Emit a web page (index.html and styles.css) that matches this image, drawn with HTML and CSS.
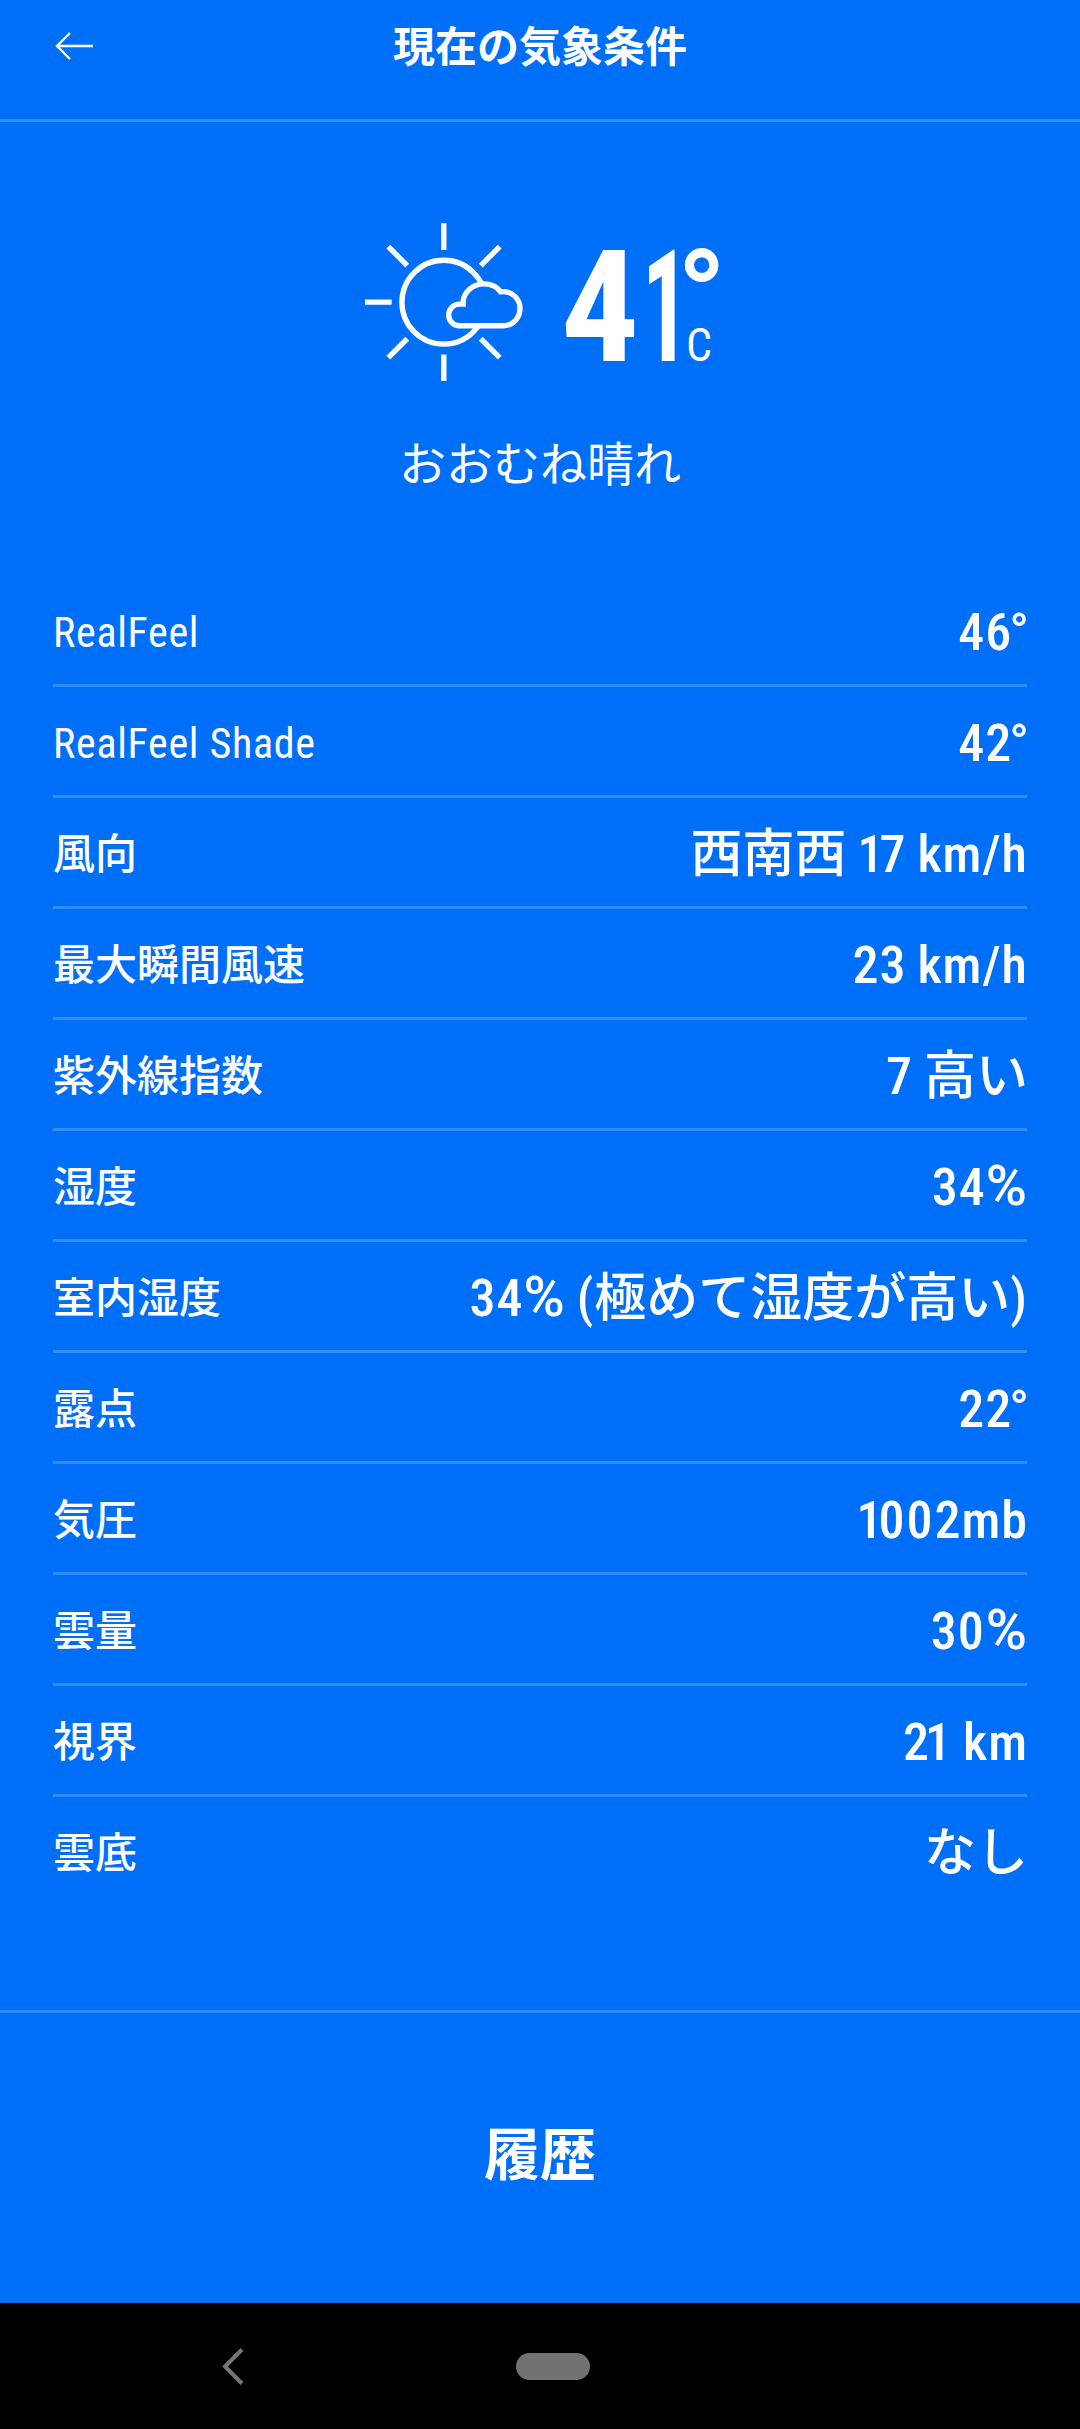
FILE: index.html
```html
<!DOCTYPE html>
<html lang="ja">

<head>
    <meta charset="UTF-8">
    <meta name="viewport" content="width=device-width, initial-scale=1.0">
    <title>現在の気象条件</title>
    <link rel="stylesheet" href="styles.css">
</head>

<body>
    <div class="header">
        <svg class="back-icon" viewBox="0 0 38 30">
            <path d="M15 2 L2 15 L15 28 M2 15 H38" />
        </svg>
        <h1 class="title">現在の気象条件</h1>
    </div>

    <div class="current">
        <div class="current-main">
            <svg class="weather-icon" viewBox="75 68 475 475">
                <circle cx="312" cy="306" r="126" />
                <path d="M312 69V149M312 463V543M75 306H155M145 139L202 196M480 139L423 196M202 416L145 473M423 416L480 473" />
                <path class="cloud" d="M359 377A32.5 32.5 0 0 1 359 312H370C368 276 400 251 433 251C455 251 473 261 483 275C518 270 541 297 541 325C541 353 520 377 491 377Z" />
            </svg>
            <div class="temp">
                <span class="temp-value">4<span class="temp-one">1</span></span>
                <div class="temp-side">
                    <span class="temp-degree">°</span>
                    <span class="temp-unit">C</span>
                </div>
            </div>
        </div>
        <div class="phrase">おおむね晴れ</div>
    </div>

    <div class="details">
        <div class="row"><span class="label latin">RealFeel</span><span class="value">46<span class="deg">°</span></span></div>
        <div class="row"><span class="label latin">RealFeel Shade</span><span class="value">42<span class="deg">°</span></span></div>
        <div class="row"><span class="label">風向</span><span class="value"><span class="ja">西南西</span> <span class="tight">1</span>7 km/h</span></div>
        <div class="row"><span class="label">最大瞬間風速</span><span class="value">23 km/h</span></div>
        <div class="row"><span class="label">紫外線指数</span><span class="value">7 <span class="ja">高い</span></span></div>
        <div class="row"><span class="label">湿度</span><span class="value">34<span class="percent">%</span></span></div>
        <div class="row"><span class="label">室内湿度</span><span class="value">34<span class="percent">%</span> (<span class="ja">極めて湿度が高い</span>)</span></div>
        <div class="row"><span class="label">露点</span><span class="value">22<span class="deg">°</span></span></div>
        <div class="row"><span class="label">気圧</span><span class="value"><span class="tight">1</span><span class="zero">00</span>2mb</span></div>
        <div class="row"><span class="label">雲量</span><span class="value">3<span class="zero">0</span><span class="percent">%</span></span></div>
        <div class="row"><span class="label">視界</span><span class="value"><span class="tight">2</span>1 km</span></div>
        <div class="row"><span class="label">雲底</span><span class="value"><span class="ja">なし</span></span></div>
    </div>

    <div class="history">履歴</div>

    <div class="nav-bar">
        <svg class="nav-back" viewBox="0 0 22 37">
            <path d="M20 1.5 L3 18.5 L20 35.5" />
        </svg>
        <div class="nav-home"></div>
    </div>
</body>

</html>
```

FILE: styles.css
```css
* {
    box-sizing: border-box;
}

body {
    margin: 0;
    min-height: 2429px;
    background: #006ff8;
    color: #fff;
    font-family: Roboto, "Noto Sans CJK JP", sans-serif;
    font-stretch: 75%;
    display: flex;
    flex-direction: column;
}

.header {
    height: 122px;
    padding: 0 55px 27px;
    border-bottom: 3px solid #338cf9;
    display: grid;
    grid-template-columns: 38px 1fr 38px;
    align-items: center;
}

.back-icon {
    width: 38px;
    height: 30px;
    fill: none;
    stroke: #fff;
    stroke-width: 2.4;
}

.title {
    margin: 0;
    padding-top: 3px;
    font-size: 42px;
    font-weight: bold;
    line-height: 60px;
    text-align: center;
}

.current {
    height: 454px;
    padding-top: 101px;
    display: flex;
    flex-direction: column;
    align-items: center;
}

.current-main {
    width: 353px;
    height: 158px;
    margin-left: 3px;
    display: flex;
    gap: 38px;
}

.weather-icon {
    flex-shrink: 0;
    width: 158px;
    height: 158px;
    fill: none;
    stroke: #fff;
    stroke-width: 16;
}

.cloud {
    fill: #006ff8;
}

.temp {
    width: 157px;
    height: 138px;
    padding-top: 28px;
    display: flex;
}

.temp-value {
    flex: none;
    width: 120px;
    font-size: 155px;
    font-weight: bold;
    line-height: 114px;
    white-space: nowrap;
}

.temp-one {
    display: inline-block;
    margin-left: 3px;
    transform: scaleX(0.6);
    transform-origin: left;
}

.temp-side {
    width: 35px;
    display: flex;
    flex-direction: column;
}

.temp-degree {
    height: 76px;
    margin-left: -4px;
    font-size: 127px;
    font-weight: bold;
    line-height: 89px;
}

.temp-unit {
    margin-left: 5px;
    font-size: 46px;
    font-weight: 400;
    line-height: 36px;
}

.phrase {
    margin-top: 46px;
    font-size: 47px;
    line-height: 75px;
}

.details {
    padding: 0 53px;
    height: 1434px;
}

.row {
    height: 111px;
    padding-top: 6px;
    border-bottom: 3px solid #338cf9;
    display: flex;
    justify-content: space-between;
    align-items: center;
}

.row:last-child {
    border-bottom: none;
    padding-bottom: 3px;
}

.label {
    font-size: 42px;
    font-weight: 500;
    line-height: 60px;
}

.latin {
    font-weight: 400;
    letter-spacing: 0.7px;
}

.value {
    margin-right: -1px;
    font-size: 52px;
    font-weight: 500;
    line-height: 76px;
    letter-spacing: 1px;
    word-spacing: -2px;
}

.ja {
    letter-spacing: 0;
}

.deg {
    margin: 0 -2px 0 -3px;
}

.tight {
    letter-spacing: -4px;
}

.zero {
    letter-spacing: 2px;
}

.percent {
    font-size: 56px;
    font-stretch: 100%;
    line-height: 1;
}

.history {
    height: 293px;
    padding-bottom: 15px;
    border-top: 3px solid #338cf9;
    font-size: 56px;
    font-weight: bold;
    display: flex;
    justify-content: center;
    align-items: center;
}

.nav-bar {
    height: 126px;
    padding-left: 222px;
    background: #000;
    display: flex;
    align-items: center;
    gap: 272px;
}

.nav-back {
    width: 22px;
    height: 37px;
    fill: none;
    stroke: #757575;
    stroke-width: 4;
}

.nav-home {
    width: 74px;
    height: 27px;
    border-radius: 14px;
    background: #727272;
}
```
